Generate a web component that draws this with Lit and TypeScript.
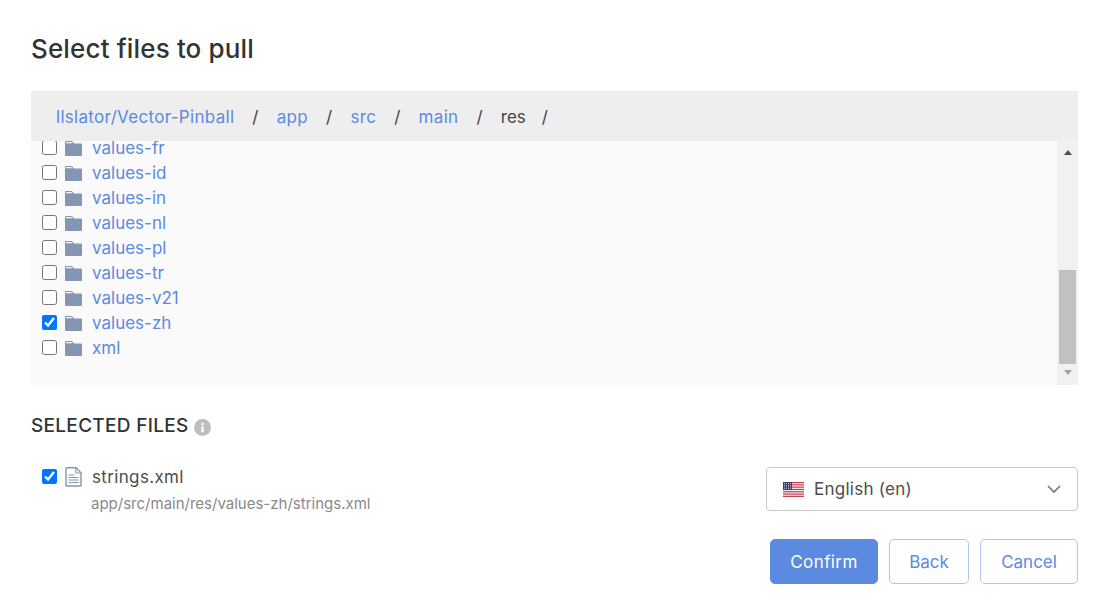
import { LitElement, html, css, svg } from "lit";
import { customElement } from "lit/decorators.js";

const folders = ["values-fr","values-id","values-in","values-nl","values-pl","values-tr","values-v21","values-zh","xml"];
const crumbs = ["llslator/Vector-Pinball","app","src","main"];

const folderIcon = html`<svg class="ic folder" width="17" height="15" viewBox="0 0 17 15"><path d="M0 1a1 1 0 0 1 1-1h5.5a1 1 0 0 1 .8.4L9 2.6h7a1 1 0 0 1 1 1V14a1 1 0 0 1-1 1H1a1 1 0 0 1-1-1Z" fill="#8496b4"/><path d="M1 1h5.4l1 1.2H1Z" fill="#fafafa"/></svg>`;
const fileIcon = html`<svg class="ic" width="17" height="20" viewBox="0 0 17 20"><path d="M1 1.5a.8.8 0 0 1 .8-.8h9.2l5 5v12.5a.8.8 0 0 1-.8.8H1.8a.8.8 0 0 1-.8-.8Z" fill="#fff" stroke="#8496b4" stroke-width="1.4"/><path d="M10.8 1v5h5" fill="none" stroke="#8496b4" stroke-width="1.1"/><path d="M3.5 8h6M3.5 10.5h10M3.5 13h10M3.5 15.5h10" stroke="#8496b4" stroke-width="1.2"/></svg>`;

const stripes = [0,1,2,3,4,5,6].map(i => svg`<rect x="0" y="${i*2.3}" width="21" height="1.15" fill="#c8384a"/>`);
const flag = html`<svg class="flag" width="21" height="15" viewBox="0 0 21 15"><rect width="21" height="15" fill="#f4f0f0"/>${stripes}<rect width="9" height="8" fill="#3c3b6e"/><path d="M1 1.5h7M1 3.2h7M1 4.9h7M1 6.6h7" stroke="#c9cbe0" stroke-width=".9" stroke-dasharray="1 1"/></svg>`;

@customElement("app-root")
export class AppRoot extends LitElement {
  static styles = css`
    :host { display: block; width: 1098px; height: 611px; overflow: hidden; background: #fff; font-family: Inter, "Liberation Sans", sans-serif; color: #333; box-sizing: border-box; padding: 0 20px 0 31px; }
    h1 { margin: 0; padding-top: 33px; height: 91px; box-sizing: border-box; font-size: 26px; letter-spacing: .15px; line-height: 32px; font-weight: 500; color: #333; }
    .crumbs { display: flex; align-items: center; height: 50px; box-sizing: border-box; padding: 2px 0 0 25px; background: #eee; font-size: 17px; letter-spacing: .3px; }
    .crumbs a { color: #5b8ae0; }
    .crumbs .sep { margin: 0 18px; color: #444; }
    .crumbs .cur { color: #444; margin-right: -2px; letter-spacing: 0; }
    .tree { display: flex; height: 244px; background: #fafafa; }
    .list { flex: 1; overflow: hidden; }
    .rows { margin-top: -6px; }
    .row { display: flex; align-items: center; height: 25px; padding-left: 11px; font-size: 17px; color: #5b8ae0; }
    input { width: 15px; height: 15px; margin: 0 8px 0 0; flex: none; }
    .ic { flex: none; margin-right: 10px; }
    .folder { margin-top: 2px; }
    .sb { width: 21px; flex: none; background: #f1f1f1; display: flex; flex-direction: column; align-items: center; }
    .up { margin-top: 9px; width: 0; height: 0; border: 4.5px solid transparent; border-top: 0; border-bottom: 5px solid #505050; }
    .thumb { margin-top: 115px; width: 17px; height: 94px; background: #c1c1c1; }
    .down { margin-top: 6px; width: 0; height: 0; border: 4.5px solid transparent; border-bottom: 0; border-top: 5px solid #a3a3a3; }
    .sel-title { margin-top: 28px; display: flex; align-items: center; gap: 5px; font-size: 19px; letter-spacing: .3px; line-height: 26px; font-weight: 500; color: #333; }
    .info { width: 17px; height: 17px; margin-top: 2px; }
    .sel { display: flex; justify-content: space-between; margin-top: 26px; }
    .file { padding-left: 11px; }
    .file-top { display: flex; align-items: center; height: 24px; font-size: 17px; letter-spacing: .35px; color: #4d4d4d; }
    .file-top input { margin-top: -2px; }
    .path { margin: 5px 0 0 49px; font-size: 15px; color: #8a8a8a; line-height: 20px; }
    .select { margin-top: 2px; display: flex; align-items: center; width: 312px; height: 44px; box-sizing: border-box; border: 1px solid #c8c8c8; border-radius: 4px; padding: 0 16px; font-size: 17px; letter-spacing: .25px; color: #4d4d4d; }
    .flag { margin-right: 10px; }
    .select span { flex: 1; }
    .btns { display: flex; justify-content: flex-end; gap: 11px; margin-top: 25px; }
    .btn { height: 45px; box-sizing: border-box; display: flex; align-items: center; justify-content: center; border-radius: 5px; border: 1px solid #aec5f0; color: #5b8ae0; font-size: 17px; background: #fff; }
    .btn.pri { background: #5b8ae0; border-color: #5b8ae0; color: #fff; width: 108px; letter-spacing: .4px; }
    .back { width: 80px; }
    .cancel { width: 98px; }
  `;

  render() {
    return html`
      <h1>Select files to pull</h1>
      <div class="crumbs">
        ${crumbs.map(c => html`<a>${c}</a><span class="sep">/</span>`)}
        <span class="cur">res</span><span class="sep">/</span>
      </div>
      <div class="tree">
        <div class="list"><div class="rows">
          ${folders.map(f => html`<div class="row"><input type="checkbox" .checked=${f === "values-zh"} />${folderIcon}<span>${f}</span></div>`)}
        </div></div>
        <div class="sb"><i class="up"></i><i class="thumb"></i><i class="down"></i></div>
      </div>
      <div class="sel-title">SELECTED FILES
        <svg class="info" viewBox="0 0 17 17"><circle cx="8.5" cy="8.5" r="8.5" fill="#bdbdbd"/><rect x="7.3" y="7.2" width="2.4" height="6" fill="#fff"/><rect x="7.3" y="3.8" width="2.4" height="2.2" fill="#fff"/></svg>
      </div>
      <div class="sel">
        <div class="file">
          <div class="file-top"><input type="checkbox" checked />${fileIcon}<span>strings.xml</span></div>
          <div class="path">app/src/main/res/values-zh/strings.xml</div>
        </div>
        <div class="select">${flag}<span>English (en)</span>
          <svg width="14" height="8" viewBox="0 0 14 8"><path d="M1 1l6 6 6-6" fill="none" stroke="#777" stroke-width="1.7"/></svg>
        </div>
      </div>
      <div class="btns">
        <div class="btn pri">Confirm</div>
        <div class="btn back">Back</div>
        <div class="btn cancel">Cancel</div>
      </div>
    `;
  }
}
